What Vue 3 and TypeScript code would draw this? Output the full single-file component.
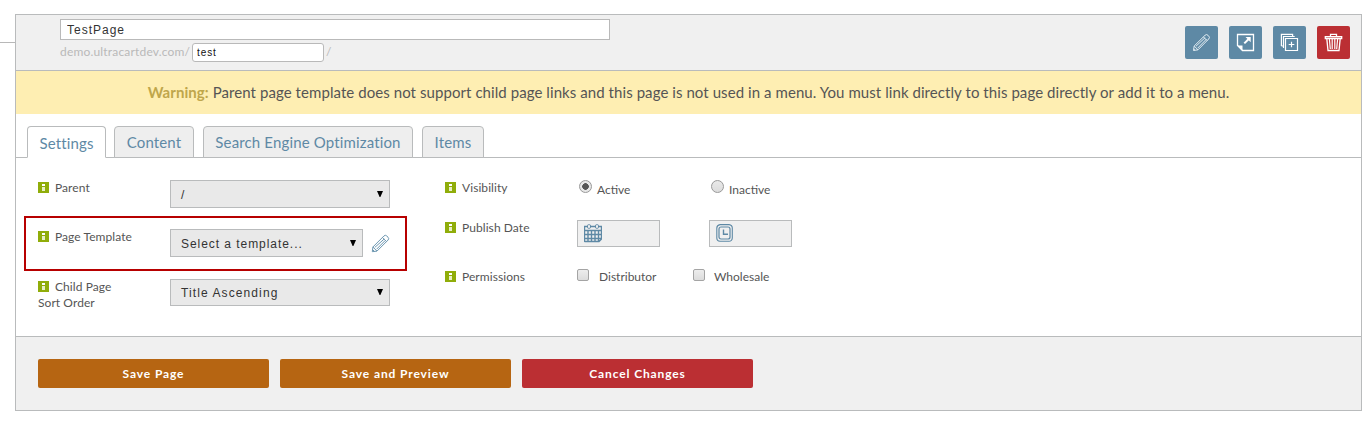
<script setup lang="ts">
import { ref } from 'vue'

interface SelectRow { label: string[]; value: string; kind: string }

const title = ref('TestPage')
const slug = ref('test')
const tabs = [
  { name: 'Settings', cls: 'settings' },
  { name: 'Content', cls: 'content' },
  { name: 'Search Engine Optimization', cls: 'seo' },
  { name: 'Items', cls: 'items' },
]
const active = ref('Settings')
const rows: SelectRow[] = [
  { label: ['Parent'], value: '/', kind: 'parent' },
  { label: ['Page Template'], value: 'Select a template...', kind: 'template' },
  { label: ['Child Page', 'Sort Order'], value: 'Title Ascending', kind: 'sort' },
]
const actions = [
  { text: 'Save Page', cls: 'save' },
  { text: 'Save and Preview', cls: 'save' },
  { text: 'Cancel Changes', cls: 'cancel' },
]
</script>

<template>
  <div class="page">
    <div class="rule"></div>
    <main class="panel">
      <header class="head">
        <div class="names">
          <input v-model="title" class="title" />
          <div class="url">
            <span class="domain">demo.ultracartdev.com/</span>
            <input v-model="slug" class="slug" />
            <span class="slash">/</span>
          </div>
        </div>
        <div class="tools">
          <button class="tool">
            <svg width="19" height="19" viewBox="0 0 19 19"><g fill="none" stroke="#e2edf3" stroke-width="1"><path d="M1.5 17.5 2.2 13 13 2.3Q14.5.8 16 2.3L16.7 3Q18.2 4.5 16.7 6L6 16.8Z" /><path d="M2.2 13 6 16.8M11.4 3.9 15.1 7.6M4 13.2 13.2 4.6M5.8 15 14.4 6.2M1.7 16 3 17.3" /></g></svg>
          </button>
          <button class="tool">
            <svg width="19" height="19" viewBox="0 0 19 19"><path d="M1.5 1.5H17.5V17.5H6.5L1.5 12.5Z" fill="none" stroke="#fff" stroke-width="1.3" /><path d="M1.5 12.5H6.5V17.5Z" fill="#fff" /><path d="M8.3 10.4 12.7 6" stroke="#fff" stroke-width="2" /><path d="M9.5 4H14.7V9.2Z" fill="#fff" /></svg>
          </button>
          <button class="tool">
            <svg width="19" height="19" viewBox="0 0 19 19"><g fill="none" stroke="#fff" stroke-width="1.2"><path d="M5.5 5.5H17.5V17.5H5.5Z" /><path d="M3.5 14.9V3.5H14.7M1.4 13V1.3H12.6V3M1.4 13H3M11.5 8.7V14.3M8.7 11.5H14.3" /></g></svg>
          </button>
          <button class="tool danger">
            <svg width="19" height="19" viewBox="0 0 19 19"><g fill="none" stroke="#fff"><path d="M6.5 3.2V1.4H12.5V3.2M1.3 3.7H17.7V5.5H1.3ZM2.8 5.6 4 17.5H15L16.2 5.6" stroke-width="1.3" /><path d="M5.4 6 6.3 16M8.2 6V16M10.8 6V16M13.6 6 12.7 16" stroke-width="1.2" /></g></svg>
          </button>
        </div>
      </header>

      <p class="warning"><span class="msg"><b>Warning:</b> Parent page template does not support child page links and this page is not used in a menu. You must link directly to this page directly or add it to a menu.</span></p>

      <nav class="tabs">
        <a v-for="t in tabs" :key="t.name" class="tab" :class="[t.cls, { on: t.name === active }]" @click="active = t.name"><span>{{ t.name }}</span></a>
      </nav>

      <section class="form">
        <div class="col left">
          <div v-for="r in rows" :key="r.kind" class="row" :class="r.kind">
            <div class="label"><i class="info"></i><span>{{ r.label[0] }}</span><div v-if="r.label[1]">{{ r.label[1] }}</div></div>
            <div class="select"><span>{{ r.value }}</span><svg width="6" height="6" viewBox="0 0 6 6"><path d="M0 0H6L3.4 6H2.6Z" fill="#000" /></svg></div>
            <svg v-if="r.kind === 'template'" class="edit" width="19" height="19" viewBox="0 0 19 19"><g fill="none" stroke="#6d97b1" stroke-width="1"><path d="M1.3 17.7 1.9 13 13 1.9Q14.3.6 15.8 2L17 3.2Q18.4 4.7 17.1 6L6 17.1Z" /><path d="M1.9 13 6 17.1M11.4 3.5 15.5 7.6M3.8 13.4 13.2 5M5.6 15.2 14.1 6.6M1.5 15.5 3.5 17.5" /></g></svg>
          </div>
        </div>

        <div class="col right">
          <div class="row visibility">
            <div class="label"><i class="info"></i><span>Visibility</span></div>
            <label class="choice first"><i class="radio checked"></i><span>Active</span></label>
            <label class="choice second"><i class="radio"></i><span>Inactive</span></label>
          </div>
          <div class="row publish">
            <div class="label"><i class="info"></i><span>Publish Date</span></div>
            <div class="date">
              <svg width="18" height="19" viewBox="0 0 18 19"><g fill="none" stroke="#5e89a5" stroke-width="1"><path d="M.5 18V2.5H3M6 2.5H12M15 2.5H17.5V15L15 17.5H.5M.5 6.5H17.5M.5 10.5H17.5M.5 14.5H17.5M4 6V18M7.5 6V18M11 6V18M14.5 6V18" stroke-width="1.4" /><rect x="3.5" y=".7" width="3" height="3.6" rx="1" /><rect x="11.5" y=".7" width="3" height="3.6" rx="1" /></g></svg>
            </div>
            <div class="date">
              <svg width="17" height="18" viewBox="0 0 17 18"><g fill="none" stroke="#5e89a5"><path d="M4 .6H13Q16.3 1 16.3 4V14Q16 17.3 13 17.3H4Q.8 17 .8 14V4Q1 1 4 .6Z" stroke-width="1.1" /><rect x="3" y="3" width="11" height="12" rx="2" stroke-width="1.2" /><path d="M7.5 5.5V10.3H12" stroke-width="1.4" /></g></svg>
            </div>
          </div>
          <div class="row permissions">
            <div class="label"><i class="info"></i><span>Permissions</span></div>
            <label class="perm one"><i class="check"></i><span>Distributor</span></label>
            <label class="perm two"><i class="check"></i><span>Wholesale</span></label>
          </div>
        </div>
        <div class="highlight"></div>
      </section>

      <footer class="foot">
        <button v-for="a in actions" :key="a.text" class="action" :class="a.cls">{{ a.text }}</button>
      </footer>
    </main>
  </div>
</template>

<style>
body { margin: 0; background: #fff; }
</style>

<style scoped>
* { box-sizing: border-box; }
.page { display: flex; height: 421px; font: 12px/16px Lato, "Open Sans", sans-serif; color: #555; overflow: hidden; }
.rule { width: 15px; height: 1px; margin-top: 42px; background: #b8b8b8; }
.panel { width: 1347px; height: 397px; margin-top: 14px; border: 1px solid #b9bbbc; display: flex; flex-direction: column; }
.head { height: 56px; flex: none; background: #f0f0f0; border-bottom: 1px solid #b9bbbc; display: flex; justify-content: space-between; padding: 4px 11px 0 44px; }
input { display: block; border: 1px solid #b9b9b9; outline: none; background: #fff; color: #333; font-family: "Liberation Sans", Arial, sans-serif; }
.title { width: 550px; height: 21px; padding: 0 6px; font-size: 12px; letter-spacing: 1px; }
.url { display: flex; margin-top: 3px; color: #b9b9b9; }
.domain { width: 132px; padding-top: 1px; white-space: nowrap; letter-spacing: .18px; }
.slug { width: 132px; height: 19px; padding: 0 4px; border-radius: 3px; font-size: 10px; letter-spacing: .9px; color: #111; }
.slash { margin: 1px 0 0 2px; }
.tools { display: flex; gap: 11px; padding-top: 7px; }
button { border: 0; padding: 0; }
.tool { width: 33px; height: 33px; border-radius: 2px; background: #5e89a5; display: flex; align-items: center; justify-content: center; }
.danger { background: #bb2f33; }
.warning { height: 43px; flex: none; margin: 0; background: #feeeb2; font-size: 15px; line-height: 43px; letter-spacing: .07px; text-align: center; white-space: nowrap; }
.warning b { color: #bfa64b; }
.tabs { height: 44px; flex: none; display: flex; align-items: flex-end; padding-left: 11px; gap: 8px; border-bottom: 1px solid #b9bbbc; }
.tab { height: 32px; border: 1px solid #b9bbbc; border-radius: 4px 4px 0 0; background: #eee; color: #5e89a5; font-size: 15px; letter-spacing: .15px; line-height: 31px; text-align: center; white-space: nowrap; margin-bottom: -1px; }
.tab.on { background: #fff; border-bottom-color: #fff; line-height: 33px; }
.settings { width: 79px; }
.content { width: 80px; }
.seo { width: 210px; margin-left: 1px; }
.items { width: 62px; margin-left: 1px; }
.form { position: relative; flex: 1; display: flex; padding: 22px 0 0 22px; }
.col { width: 407px; }
.right { width: 500px; }
.row { display: flex; height: 49px; }
.sort { margin-top: 1px; }
.label { width: 132px; flex: none; white-space: nowrap; letter-spacing: .07px; }
.info { display: inline-block; position: relative; width: 11px; height: 11px; margin-right: 6px; vertical-align: -1px; background: #90ad0a; }
.info::before { content: ""; position: absolute; left: 4px; top: 2px; width: 3px; height: 2px; background: #fff; }
.info::after { content: ""; position: absolute; left: 4px; top: 5px; width: 3px; height: 4px; background: #e7efc5; }
.select { width: 220px; height: 28px; padding: 1px 6px 0 10px; display: flex; align-items: center; justify-content: space-between; border: 1px solid #b9bbbc; background: #e9e9e9; color: #333; font: 12px/16px "Liberation Sans", Arial, sans-serif; letter-spacing: 1.1px; }
.select svg { margin-top: -2px; }
.template .select { width: 193px; letter-spacing: .95px; }
.sort .select { height: 27px; }
.edit { margin: 5px 0 0 8px; }
.visibility { height: 40px; }
.choice { display: flex; gap: 5px; padding: 2px 0 0 2px; }
.first { width: 132px; }
.radio { width: 13px; height: 13px; margin-top: -2px; border: 1px solid #999; border-radius: 50%; background: linear-gradient(#e9e9e9, #dcdcdc); }
.checked { background: radial-gradient(circle, #555 0 3px, #e7e7e7 3.6px); }
.date { width: 83px; height: 27px; margin-right: 49px; padding: 3px 6px; border: 1px solid #b9bbbc; background: #f0f0f0; }
.date svg { display: block; }
.perm { display: flex; gap: 10px; }
.one { width: 116px; }
.two { gap: 9px; }
.check { width: 12px; height: 12px; border: 1px solid #a4a4a4; border-radius: 2px; background: linear-gradient(#ededed, #dcdcdc); }
.highlight { position: absolute; left: 8px; top: 58px; width: 383px; height: 55px; border: 2px solid #b70000; pointer-events: none; }
.foot { height: 74px; flex: none; border-top: 1px solid #b9bbbc; background: #f0f0f0; display: flex; gap: 11px; padding: 22px; }
.action { width: 231px; height: 29px; border-radius: 2px; color: #fff; font: bold 12px/29px Lato, sans-serif; letter-spacing: .88px; }
.save { background: #b66512; }
.cancel { background: #bb2f33; }
</style>
